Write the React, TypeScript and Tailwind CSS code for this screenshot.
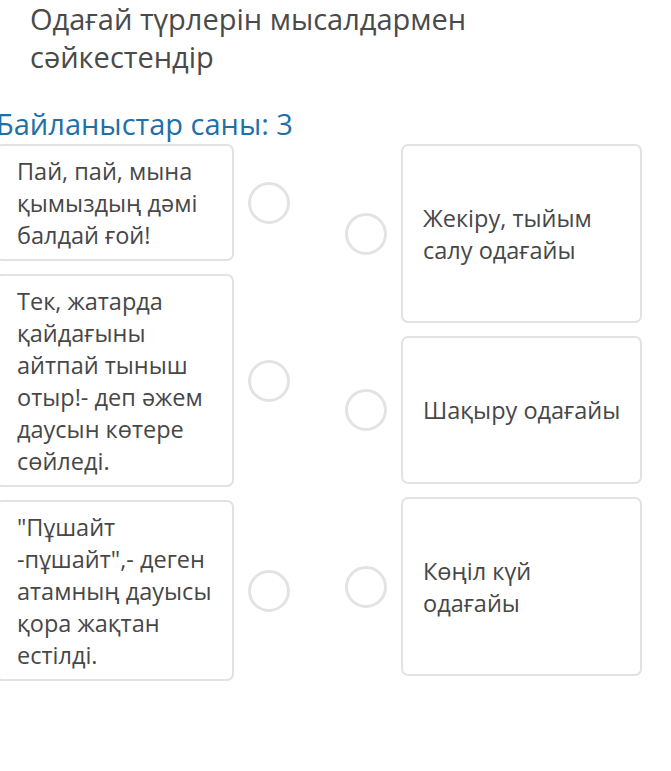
const LEFT_ITEMS = [
  "Пай, пай, мына қымыздың дәмі балдай ғой!",
  "Тек, жатарда қайдағыны айтпай тыныш отыр!- деп әжем даусын көтере сөйледі.",
  "\"Пұшайт -пұшайт\",- деген атамның дауысы қора жақтан естілді.",
];

const RIGHT_ITEMS = [
  { text: "Жекіру, тыйым салу одағайы", height: "h-[179px]" },
  { text: "Шақыру одағайы", height: "h-[148px]" },
  { text: "Көңіл күй одағайы", height: "h-[179px]" },
];

const cardClass =
  "rounded-[7px] border-2 border-[#e2e2e2] bg-white pl-[20px] text-[23.5px] leading-[32px] text-[#474747]";

function Dot() {
  return (
    <span className="block h-[42px] w-[42px] shrink-0 rounded-full border-[3px] border-[#e3e3e3]" />
  );
}

export default function App() {
  return (
    <div className="h-[771px] w-[671px] overflow-hidden bg-white font-['Open_Sans',sans-serif]">
      <h1 className="w-[540px] pl-[30px] text-[29px] leading-[38px] font-normal text-[#4a4a4a]">
        Одағай түрлерін мысалдармен сәйкестендір
      </h1>
      <div className="-ml-[4px] mt-[31px] text-[29px] leading-[34px] text-[#1f6fa8]">
        Байланыстар саны: 3
      </div>
      <div className="mt-[3px] flex">
        <div className="-ml-[5px] flex w-[295px] flex-col gap-[13px]">
          {LEFT_ITEMS.map((text) => (
            <div key={text} className="flex items-center gap-[14px]">
              <div className={`${cardClass} w-[240px] py-[8.5px] pr-[20px]`}>
                {text}
              </div>
              <Dot />
            </div>
          ))}
        </div>
        <div className="ml-[55px] flex flex-col gap-[13px]">
          {RIGHT_ITEMS.map((item) => (
            <div key={item.text} className="flex items-center gap-[14px]">
              <Dot />
              <div
                className={`${cardClass} ${item.height} flex w-[241px] items-center pr-[8px]`}
              >
                <span>{item.text}</span>
              </div>
            </div>
          ))}
        </div>
      </div>
    </div>
  );
}
